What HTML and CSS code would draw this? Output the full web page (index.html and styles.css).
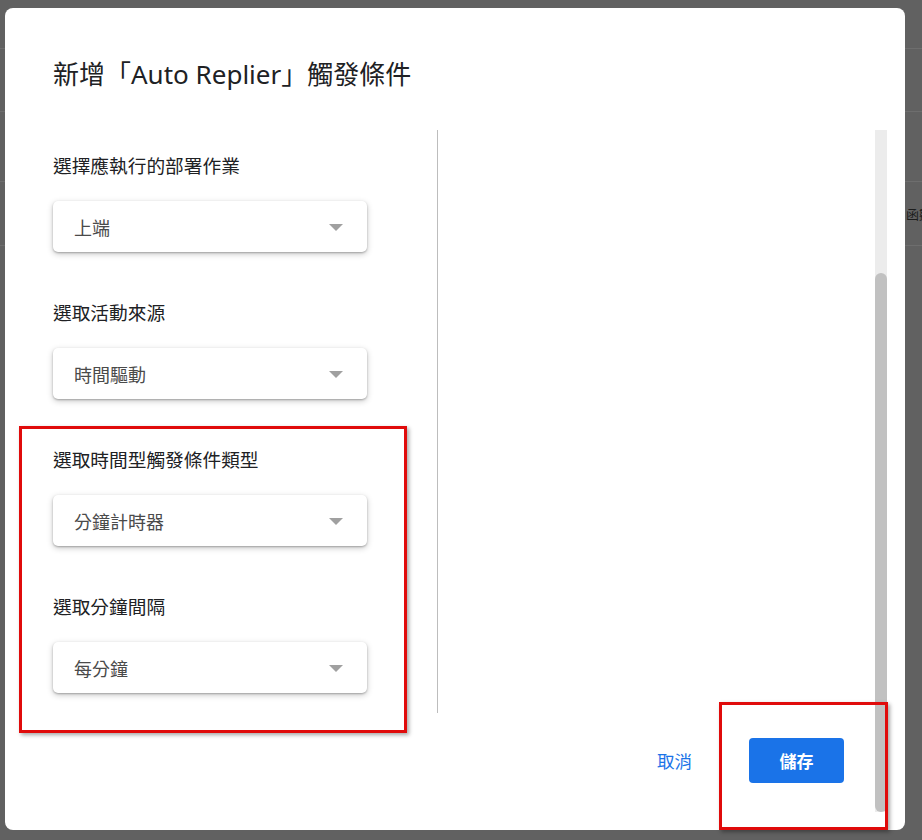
FILE: index.html
```html
<!DOCTYPE html>
<html lang="zh-Hant">
<head>
<meta charset="utf-8">
<title>新增觸發條件</title>
<link rel="stylesheet" href="styles.css">
</head>
<body>
<div class="page">
  <div class="bg-row r1"></div>
  <div class="bg-row r2"></div>
  <div class="bg-row r3"></div>
  <div class="bg-row r4"><span class="bg-mark"></span><span class="bg-glyph">函數</span></div>
  <div class="bg-row r5"></div>
</div>

<div class="dialog">
  <div class="dialog-header">
    <h1 class="title">新增「Auto Replier」觸發條件</h1>
  </div>
  <div class="dialog-main">
    <div class="dialog-inner">
      <div class="columns">
        <div class="col-left">
          <div class="field">
            <div class="label">選擇應執行的部署作業</div>
            <div class="select"><span class="select-text">上端</span><span class="arrow"></span></div>
          </div>
          <div class="field">
            <div class="label">選取活動來源</div>
            <div class="select"><span class="select-text">時間驅動</span><span class="arrow"></span></div>
          </div>
          <div class="field">
            <div class="label">選取時間型觸發條件類型</div>
            <div class="select"><span class="select-text">分鐘計時器</span><span class="arrow"></span></div>
          </div>
          <div class="field">
            <div class="label">選取分鐘間隔</div>
            <div class="select"><span class="select-text">每分鐘</span><span class="arrow"></span></div>
          </div>
        </div>
        <div class="col-right"></div>
      </div>
      <div class="footer">
        <button class="btn-cancel">取消</button>
        <button class="btn-save">儲存</button>
      </div>
    </div>
    <div class="scrollbar">
      <div class="scroll-gap"></div>
      <div class="scroll-thumb"></div>
    </div>
  </div>
</div>

<div class="annot annot-fields"></div>
<div class="annot annot-save"></div>
</body>
</html>
```

FILE: styles.css
```css
html, body {
  margin: 0;
  padding: 0;
}
body {
  width: 922px;
  height: 840px;
  overflow: hidden;
  background: #616161;
  font-family: "Noto Sans", "Noto Sans CJK TC", sans-serif;
  position: relative;
}

/* page underneath the scrim */
.page {
  display: flex;
  flex-direction: column;
}
.bg-row {
  border-bottom: 1px solid #6e6e6e;
  box-sizing: border-box;
  position: relative;
  display: flex;
  align-items: center;
}
.r1 { height: 49px; }
.r2 { height: 63px; }
.r3 { height: 70px; }
.r4 { height: 64px; }
.r5 { height: 100px; border-bottom: none; }
.bg-mark {
  width: 5px;
  height: 2px;
  background: #1e1e1e;
  margin-top: -6px;
}
.bg-glyph {
  margin-left: 906px;
  font-family: "Noto Sans CJK TC", sans-serif;
  font-size: 13px;
  color: #1c1c1c;
  white-space: nowrap;
}

/* dialog overlay */
.dialog {
  position: absolute;
  left: 5px;
  top: 8px;
  width: 900px;
  height: 822px;
  background: #fff;
  border-radius: 8px;
  display: flex;
  flex-direction: column;
  overflow: hidden;
}
.dialog-header {
  height: 122px;
  box-sizing: border-box;
  padding: 49px 0 0 48px;
}
.title {
  margin: 0;
  font-size: 26px;
  line-height: 34px;
  font-weight: 400;
  color: #202124;
  letter-spacing: 0;
}
.dialog-main {
  display: flex;
  height: 682px;
}
.dialog-inner {
  width: 870px;
  display: flex;
  flex-direction: column;
}
.columns {
  display: flex;
  height: 583px;
}
.col-left {
  width: 384px;
  padding-left: 48px;
  border-right: 1px solid #bdbdbd;
  padding-top: 23px;
  display: flex;
  flex-direction: column;
  gap: 48px;
}
.col-right {
  flex: 1;
}
.field {
  display: flex;
  flex-direction: column;
  gap: 24px;
}
.label {
  font-size: 18.7px;
  line-height: 24px;
  color: #202124;
  font-family: "Noto Sans CJK TC", sans-serif;
}
.select {
  width: 314px;
  height: 51px;
  box-sizing: border-box;
  border-radius: 5px;
  background: #fff;
  box-shadow: 0 1px 2px rgba(0,0,0,0.25), 0 2px 6px rgba(0,0,0,0.22);
  display: flex;
  align-items: center;
  padding: 0 24px 0 21px;
}
.select-text {
  flex: 1;
  font-family: "Noto Sans CJK TC", sans-serif;
  font-size: 18px;
  color: #4a4a4a;
}
.arrow {
  width: 0;
  height: 0;
  border-left: 7px solid transparent;
  border-right: 7px solid transparent;
  border-top: 7px solid #a0a0a0;
  margin-top: 1px;
}

.footer {
  display: flex;
  justify-content: flex-end;
  align-items: flex-start;
  padding: 25px 31px 0 0;
  gap: 41px;
}
.btn-cancel,
.btn-save {
  font-family: "Noto Sans CJK TC", sans-serif;
  font-size: 17px;
  height: 45px;
  border: none;
  border-radius: 4px;
  cursor: pointer;
}
.btn-cancel {
  background: transparent;
  color: #1a73e8;
  padding: 0 16px;
  font-size: 17.5px;
}
.btn-save {
  width: 95px;
  background: #1a73e8;
  color: #fff;
  font-weight: 600;
}

.scrollbar {
  width: 12px;
  background: #ececec;
  display: flex;
  flex-direction: column;
}
.scroll-gap {
  height: 143px;
}
.scroll-thumb {
  flex: 1;
  background: #c1c1c1;
  border-radius: 6px;
}

/* red annotation boxes drawn over the screenshot */
.annot {
  position: absolute;
  border: 3px solid #e00b0b;
  box-sizing: border-box;
  box-shadow: 2px 2px 4px rgba(0,0,0,0.35);
}
.annot-fields {
  left: 19px;
  top: 426px;
  width: 388px;
  height: 307px;
}
.annot-save {
  left: 719px;
  top: 702px;
  width: 169px;
  height: 128px;
}
```
